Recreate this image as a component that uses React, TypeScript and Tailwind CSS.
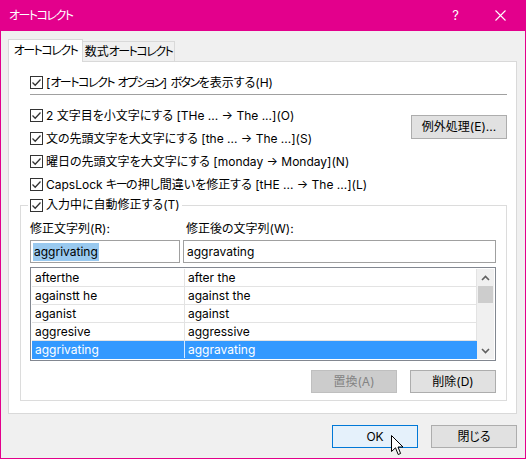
import React from 'react';

// Inter for Latin, Noto CJK JP with proportional kana (palt) for Japanese
const FONT = "font-['Inter','Noto_Sans_CJK_JP',sans-serif] [font-feature-settings:'palt']";

// Meiryo-style narrow katakana: tighten katakana runs a little
function J({ t }: { t: string }) {
  const parts = t.split(/([\u30A0-\u30FF]+)/);
  return (
    <>
      {parts.map((p, i) =>
        /^[\u30A0-\u30FF]+$/.test(p) ? (
          <span key={i} className="tracking-[-1.5px]">{p}</span>
        ) : (
          <React.Fragment key={i}>{p}</React.Fragment>
        ),
      )}
    </>
  );
}

function Check() {
  return (
    <span className="flex h-[13px] w-[13px] shrink-0 items-center justify-center border border-[#333333] bg-white">
      <svg width="11" height="11" viewBox="0 0 11 11">
        <path d="M1.5 5.5 L4.2 8.2 L9.5 2.5" fill="none" stroke="#333333" strokeWidth="1.3" />
      </svg>
    </span>
  );
}

function CheckRow({ label }: { label: string }) {
  return (
    <div className="flex h-[23px] items-center gap-[3px]">
      <Check />
      <span className="whitespace-nowrap"><J t={label} /></span>
    </div>
  );
}

function Btn({ label, w, disabled, primary }: { label: string; w: string; disabled?: boolean; primary?: boolean }) {
  const base = 'flex h-[23px] items-center justify-center whitespace-nowrap border';
  const look = disabled
    ? 'border-[#bfbfbf] bg-[#cccccc] text-[#838383]'
    : primary
      ? 'border-[#0078d7] bg-[#e5f1fb] text-black'
      : 'border-[#adadad] bg-[#e1e1e1] text-black';
  return <div className={`${base} ${look} ${w}`}>{label}</div>;
}

const ROWS: [string, string][] = [
  ['afterthe', 'after the'],
  ['againstt he', 'against the'],
  ['aganist', 'against'],
  ['aggresive', 'aggressive'],
  ['aggrivating', 'aggravating'],
];

function Chevron({ up }: { up?: boolean }) {
  return (
    <svg width="9" height="6" viewBox="0 0 9 6">
      <path d={up ? 'M1 5 L4.5 1.5 L8 5' : 'M1 1 L4.5 4.5 L8 1'} fill="none" stroke="#606060" strokeWidth="1.6" />
    </svg>
  );
}

export default function App() {
  return (
    <div className={`flex h-[459px] w-[526px] flex-col bg-[#e3008c] px-px pb-px text-[12px] text-black ${FONT}`}>
      {/* title bar */}
      <div className="flex h-[31px] items-center text-white">
        <span className="ml-[8px]"><J t="オートコレクト" /></span>
        <span className="ml-auto mr-[36px] text-[13px]">?</span>
        <svg className="mr-[19px]" width="11" height="11" viewBox="0 0 11 11">
          <path d="M0.5 0.5 L10.5 10.5 M10.5 0.5 L0.5 10.5" stroke="white" strokeWidth="1.1" />
        </svg>
      </div>

      <div className="flex flex-1 flex-col bg-[#f0f0f0] pl-[7px] pr-[8px] pt-[8px]">
        {/* tabs */}
        <div className="flex h-[22px] items-end">
          <div className="relative z-10 -mb-px flex h-[23px] w-[75px] items-center justify-center whitespace-nowrap border border-b-0 border-[#d9d9d9] bg-white">
            <J t="オートコレクト" />
          </div>
          <div className="flex h-[20px] w-[92px] items-center justify-center whitespace-nowrap border border-b-0 border-l-0 border-[#d9d9d9] bg-[#f0f0f0]">
            <J t="数式オートコレクト" />
          </div>
        </div>

        {/* panel */}
        <div className="flex h-[353px] w-[509px] flex-col border border-[#d9d9d9] bg-white pl-[21px] pr-[9px] pt-[9px]">
          <CheckRow label="[オートコレクト オプション] ボタンを表示する(H)" />
          <div className="h-px bg-[#a0a0a0]" />

          <div className="mt-[9px] flex">
            <div className="flex flex-col">
              <CheckRow label="2 文字目を小文字にする [THe ... → The ...](O)" />
              <CheckRow label="文の先頭文字を大文字にする [the ... → The ...](S)" />
              <CheckRow label="曜日の先頭文字を大文字にする [monday → Monday](N)" />
              <CheckRow label="CapsLock キーの押し間違いを修正する [tHE ... → The ...](L)" />
            </div>
            <div className="ml-auto mt-[11px]">
              <Btn label="例外処理(E)..." w="w-[96px] h-[24px]" />
            </div>
          </div>

          <fieldset className="-ml-[10px] -mt-px w-[487px] border border-[#dcdcdc] px-[9px] pb-[7px]">
            <legend className="-ml-[2px] flex h-[20px] items-center gap-[3px] px-[2px]">
              <Check />
              <span>入力中に自動修正する(T)</span>
            </legend>

            <div className="mt-[6px] flex h-[16px] items-center">
              <span className="w-[156px]">修正文字列(R):</span>
              <span>修正後の文字列(W):</span>
            </div>

            <div className="mt-[3px] flex gap-[3px]">
              <div className="flex h-[23px] w-[150px] items-center border border-[#a0a0a0] bg-white px-[2px]">
                <span className="bg-[#99c9ef] px-px">aggrivating</span>
              </div>
              <div className="flex h-[23px] w-[313px] items-center border border-[#a0a0a0] bg-white px-[3px]">
                aggravating
              </div>
            </div>

            <div className="mt-[4px] flex h-[94px] w-[466px] border border-[#828790] bg-white p-px">
              <div className="flex flex-1 flex-col">
                {ROWS.map(([a, b], i) => {
                  const sel = i === ROWS.length - 1;
                  return (
                    <div
                      key={a}
                      className={`flex h-[18px] border-b ${sel ? 'border-[#3399ff] bg-[#3399ff] text-white' : 'border-[#e3e3e3]'}`}
                    >
                      <div className={`flex w-[153px] items-center border-r px-[3px] ${sel ? 'border-[#d6e9ff]' : 'border-[#e3e3e3]'}`}>{a}</div>
                      <div className={`flex flex-1 items-center border-r px-[3px] ${sel ? 'border-[#3399ff]' : 'border-[#e3e3e3]'}`}>{b}</div>
                    </div>
                  );
                })}
              </div>
              <div className="flex w-[17px] flex-col items-center bg-[#f0f0f0]">
                <div className="flex h-[17px] w-full items-center justify-center">
                  <Chevron up />
                </div>
                <div className="h-[17px] w-[15px] bg-[#cdcdcd]" />
                <div className="flex-1" />
                <div className="flex h-[17px] w-full items-center justify-center">
                  <Chevron />
                </div>
              </div>
            </div>

            <div className="mt-[9px] flex justify-end gap-[13px] pr-px">
              <Btn label="置換(A)" w="w-[86px]" disabled />
              <Btn label="削除(D)" w="w-[86px]" />
            </div>
          </fieldset>
        </div>

        {/* footer */}
        <div className="mt-[11px] flex justify-end gap-[13px]">
          <div className="relative">
            <Btn label="OK" w="w-[86px]" primary />
            <svg className="absolute left-[59px] top-[10px]" width="13" height="21" viewBox="0 0 13 21">
              <path d="M0.5 0.5 L0.5 16.5 L4.5 12.8 L7.2 19.5 L9.6 18.5 L7 12 L12 12 Z" fill="white" stroke="black" strokeWidth="1" strokeLinejoin="miter" />
            </svg>
          </div>
          <Btn label="閉じる" w="w-[86px]" />
        </div>
      </div>
    </div>
  );
}
